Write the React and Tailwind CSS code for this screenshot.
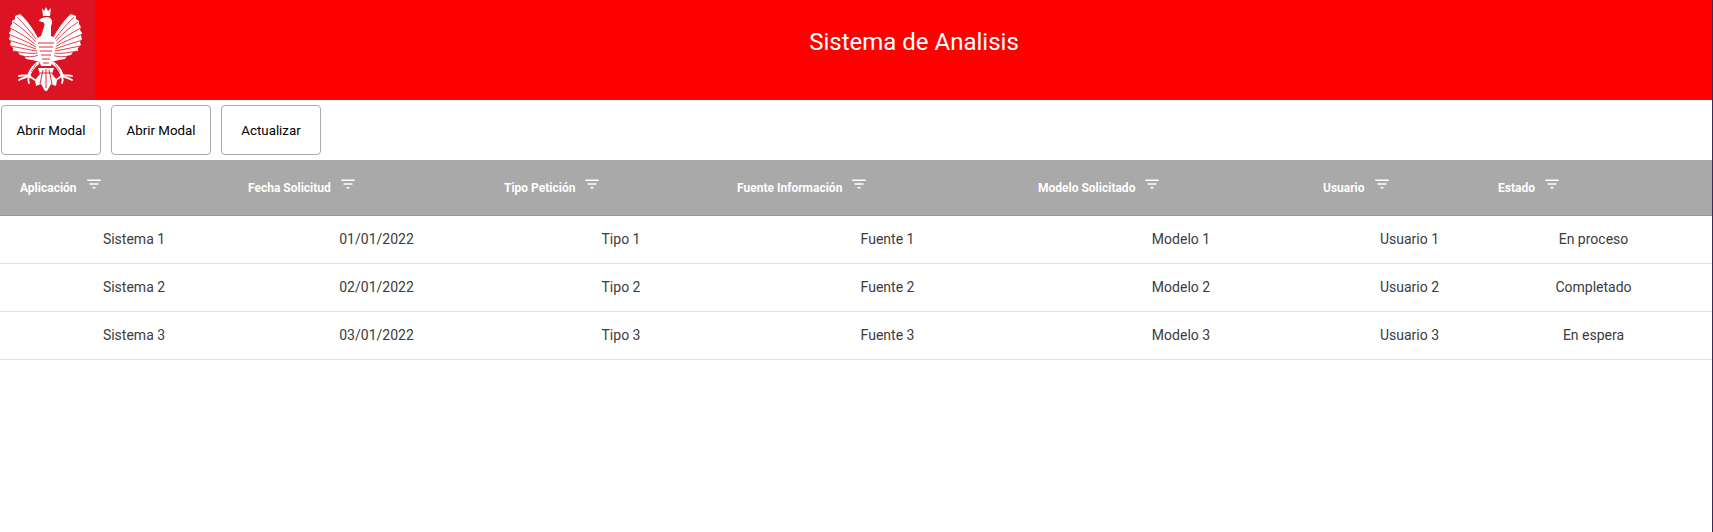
const COLS = ["Aplicación", "Fecha Solicitud", "Tipo Petición", "Fuente Información", "Modelo Solicitado", "Usuario", "Estado"];

const ROWS = [
  ["Sistema 1", "01/01/2022", "Tipo 1", "Fuente 1", "Modelo 1", "Usuario 1", "En proceso"],
  ["Sistema 2", "02/01/2022", "Tipo 2", "Fuente 2", "Modelo 2", "Usuario 2", "Completado"],
  ["Sistema 3", "03/01/2022", "Tipo 3", "Fuente 3", "Modelo 3", "Usuario 3", "En espera"],
];

// red lines that split the left wing into feathers, the right one is mirrored
const FEATHER_GAPS = [
  "M36 39 C30 31 25 25 17 17",
  "M36 42 C29 34 22 28 13 22",
  "M36 45 C28 38 20 33 10 28",
  "M36 47 C28 42 18 38 8 34",
  "M36 49 C28 46 19 43 8 40",
  "M37 51 C29 50 22 48 10 46",
  "M38 53 C31 54 24 53 14 51",
  "M39 55 C34 57 28 57 20 56",
];

function Eagle() {
  const wing = (
    <g>
      <path
        fill="#fff"
        d="M40 42 C35 32 29 22 20 14 L15 16 L15 19 L12 21 L12 24 L10 27 L11 30 L9 33 L10 36 L9 39 L11 42 L10 45 L13 48 L13 51 L18 52 L20 55 L24 56 L26 59 L32 60 L40 62 Z"
      />
      <g fill="none" stroke="#dc1322" strokeWidth="0.8">
        {FEATHER_GAPS.map((d) => (
          <path key={d} d={d} />
        ))}
      </g>
      <g fill="none" stroke="#fff" strokeLinecap="round">
        <path strokeWidth="3" d="M38 63 C34 66 31 69 29 75" />
        <path strokeWidth="1.8" d="M29 75 C25 76 21 75 19 76 M29 76 C25 78 22 78 19 80 M29 77 C28 79 28 81 29 83 M29 75 C31 78 33 79 35 80" />
      </g>
      <path fill="none" stroke="#dc1322" strokeWidth="0.6" d="M36 64 L31 72" />
    </g>
  );

  return (
    <svg width="95" height="100" viewBox="0 0 95 100">
      {wing}
      <g transform="matrix(-1 0 0 1 91 0)">{wing}</g>
      <g fill="#fff">
        <path d="M42 8 L44 11 L46 7 L48 11 L51 8 L50 16 L43 16 Z" />
        <path d="M39 21 C40 18 44 17 48 17 C52 18 53 22 51 26 L51 36 C56 38 58 42 56 46 L53 60 L51 66 L41 66 L39 60 L36 46 C34 42 37 38 41 36 L44 27 C45 24 44 22 42 22 Z" />
        <path d="M38 68 L54 68 L52 74 L57 80 L56 86 L51 84 L47 91 L45 91 L41 84 L36 86 L35 80 L40 74 Z" />
      </g>
      <g fill="none" stroke="#dc1322" strokeWidth="0.9">
        <path d="M38 43 H54 M39 47 H53 M40 51 H52 M41 55 H51 M42 59 H50 M43 63 H49" />
        <path d="M46 69 V88 M43 70 L40 84 M49 70 L52 84 M40 73 H52" />
      </g>
    </svg>
  );
}

function FilterIcon() {
  return (
    <svg className="ml-[8px] mt-[-9px] shrink-0" width="18" height="18" viewBox="0 0 24 24" fill="#fff">
      <path d="M10 18h4v-2h-4v2zM3 6v2h18V6H3zm3 7h12v-2H6v2z" />
    </svg>
  );
}

export default function App() {
  return (
    <div className="min-h-[532px] bg-white border-r border-[#3b2a55] font-['Roboto',sans-serif]">
      {/* Header */}
      <div className="flex h-[100px] bg-[#ff0000]">
        <div className="w-[95px] shrink-0 bg-[#dc1322]">
          <Eagle />
        </div>
        <div className="flex-1 pl-[21px] pt-[28px] text-center text-[24px] leading-[28px] text-white">
          Sistema de Analisis
        </div>
      </div>

      {/* Toolbar */}
      <div className="flex h-[60px] items-center gap-[10px] pl-[1px]">
        {["Abrir Modal", "Abrir Modal", "Actualizar"].map((label, i) => (
          <button
            key={i}
            className="h-[50px] w-[100px] rounded-[4px] border border-[#aaaaaa] bg-white pt-[2px] text-[13.33px] text-black"
          >
            {label}
          </button>
        ))}
      </div>

      {/* Table */}
      <div className="grid h-[56px] grid-cols-[228px_256px_233px_301px_285px_175px_1fr] border-b border-[#999999] bg-[#a9a9a9] pl-[20px] pt-[19px]">
        {COLS.map((col) => (
          <div key={col} className="flex h-[18px] items-center text-[12px] font-bold text-white">
            <span>{col}</span>
            <FilterIcon />
          </div>
        ))}
      </div>

      {ROWS.map((row) => (
        <div
          key={row[0]}
          className="grid h-[48px] grid-cols-[268px_217px_272px_261px_326px_131px_1fr] items-center border-b border-[#e0e0e0] text-center text-[14px] text-[#3c3c3c]"
        >
          {row.map((cell) => (
            <div key={cell}>{cell}</div>
          ))}
        </div>
      ))}
    </div>
  );
}
